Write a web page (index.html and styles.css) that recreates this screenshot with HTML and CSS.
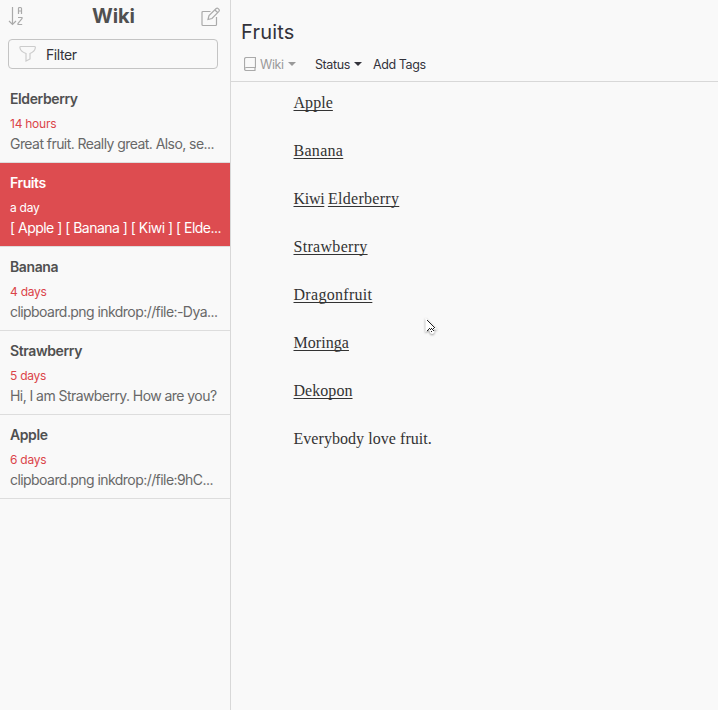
FILE: index.html
```
<!DOCTYPE html>
<html lang="en">
<head>
<meta charset="utf-8">
<title>Wiki</title>
<link rel="stylesheet" href="styles.css">
</head>
<body>
<div class="app">
  <aside class="sidebar">
    <header class="list-header">
      <svg class="sort-icon" width="18" height="22" viewBox="0 0 18 22"><path d="M4.500 2v17.500M1 16l3.500 3.500L8 16M10.500 9V3.500q0-1 1-1h1q1 0 1 1V9M10.500 6h3M10 12.500h4v1L10 18.500v1h4.200"/></svg>
      <h1 class="list-title">Wiki</h1>
      <svg class="compose-icon" width="20" height="20" viewBox="0 0 20 20"><path d="M9.500 4.500H2q-1 0-1 1V17.500q0 1 1 1h12.500q1 0 1-1V10M7 12.500l1-4 7.200-7q1-.8 2 .1l.7.7q.9 1 0 2L11 11.500zM14 3l3 3"/></svg>
    </header>
    <div class="filter">
      <svg class="filter-icon" width="18" height="18" viewBox="0 0 18 18"><path d="M1.500 1.500h14q1 0 .8 1.500-.5 3.500-5.300 5.500v5.500l-4 2V8.500Q1.500 6.500 1 3 .7 1.500 1.500 1.500z"/></svg>
      <span>Filter</span>
    </div>
    <div class="notes">
      <article class="note"><h2>Elderberry</h2><time>14 hours</time><p>Great fruit. Really great. Also, se...</p></article>
      <article class="note selected"><h2>Fruits</h2><time>a day</time><p>[ Apple ] [ Banana ] [ Kiwi ] [ Elde...</p></article>
      <article class="note"><h2>Banana</h2><time>4 days</time><p>clipboard.png inkdrop://file:-Dya...</p></article>
      <article class="note"><h2>Strawberry</h2><time>5 days</time><p>Hi, I am Strawberry. How are you?</p></article>
      <article class="note"><h2>Apple</h2><time>6 days</time><p>clipboard.png inkdrop://file:9hC...</p></article>
    </div>
  </aside>
  <main class="editor">
    <header class="note-header">
      <h1 class="note-title">Fruits</h1>
      <div class="meta">
        <span class="book"><svg class="book-icon" width="12" height="14" viewBox="0 0 12 14"><path d="M2.500.5h9v10h-9q-2 0-2 1.500V2.500q0-2 2-2zM.5 12q0 1.500 2 1.500h9M11 10.500v3"/></svg><span class="book-name">Wiki</span><i class="caret"></i></span>
        <span class="status"><span>Status</span><i class="caret"></i></span>
        <span class="tags">Add Tags</span>
      </div>
    </header>
    <div class="preview">
      <p><a>Apple</a></p>
      <p><a class="wide">Banana</a></p>
      <p class="pair"><a class="tight">Kiwi</a> <a class="wide">Elderberry</a></p>
      <p><a class="wide">Strawberry</a></p>
      <p><a class="wide">Dragonfruit</a></p>
      <p><a>Moringa</a></p>
      <p><a>Dekopon</a></p>
      <p>Everybody love fruit.</p>
    </div>
  </main>
  <svg class="cursor" width="16" height="20" viewBox="0 0 16 20"><path class="cursor-body" d="M2 2v12l3-2.500 2 4.500q2 1 3-1l-1-3h3z"/><path class="cursor-edge" d="M3 3h1v1H3zM4 4h1v1H4zM5 5h1v1H5zM6 6h1v1H6zM7 7h1v1H7zM8 8h1v1H8zM9 9h1v1H9zM10 10h1v1h-1zM3 13h1v1H3zM4 12h1v1H4zM5 11h1v1H5zM6 12h1v1H6zM7 14h1v1H7zM7 11h1v1H7zM8 12h1v1H8zM9 11h1v1H9zM9 13h1v1H9z"/></svg>
</div>
</body>
</html>
```
FILE: styles.css
```
* { box-sizing: border-box; }
body { margin: 0; background: #f9f9f9; font-family: Inter, "Liberation Sans", sans-serif; color: #33333b; }
h1, h2, p { margin: 0; }
svg { fill: none; stroke: #aaa; stroke-width: 1.2; flex: none; }
.app { position: relative; display: flex; width: 718px; height: 710px; overflow: hidden; }
.sidebar { width: 231px; border-right: 1px solid #d8d8d8; flex: none; }
.list-header { height: 39px; padding: 5px 9px 0 8px; display: flex; justify-content: space-between; align-items: flex-start; }
.list-title { font-size: 20px; line-height: 22px; font-weight: 700; color: #505050; letter-spacing: -.1px; }
.compose-icon { margin-top: 2px; }
.filter { width: 210px; height: 30px; margin-left: 8px; border: 1px solid #c4c4c4; border-radius: 4px; display: flex; align-items: center; padding-left: 10px; gap: 9px; font-size: 14px; letter-spacing: -.4px; line-height: 20px; }
.filter span { padding-top: 2px; }
.filter-icon { stroke: #ccc; }
.notes { margin-top: 10px; }
.note { height: 84px; padding: 10px 0 0 10px; border-bottom: 1px solid #ddd; white-space: nowrap; }
.note h2 { font-size: 14px; line-height: 20px; font-weight: 600; color: #505050; letter-spacing: -.4px; }
.note time { display: block; margin-top: 5px; font-size: 12px; line-height: 20px; color: #db4449; letter-spacing: -.25px; }
.note p { font-size: 14px; line-height: 20px; color: #686868; letter-spacing: -.56px; }
.note.selected { background: #dd4c50; }
.note.selected h2, .note.selected time, .note.selected p { color: #fff; }
.note.selected p { letter-spacing: -.52px; }
.editor { flex: 1; }
.note-header { height: 82px; padding: 20px 0 0 10px; border-bottom: 1px solid #d8d8d8; }
.note-title { font-size: 20px; line-height: 24px; font-weight: 400; letter-spacing: .2px; }
.meta { display: flex; align-items: center; height: 20px; margin-top: 10px; padding-left: 3px; font-size: 12.5px; letter-spacing: -.4px; }
.book, .status { display: flex; align-items: center; }
.book { width: 71px; color: #999; }
.book-name { margin: 0 4px; }
.status { width: 58px; gap: 4px; }
.caret { border: 4px solid transparent; border-top-color: currentColor; border-bottom: 0; }
.preview { padding: 9px 0 0 62.5px; font-family: "Liberation Serif", serif; font-size: 16px; line-height: 24px; letter-spacing: .05px; color: #333; }
.preview p { margin-bottom: 24px; }
.preview a { text-decoration: underline 1px; text-underline-offset: 2px; text-decoration-skip-ink: none; }
.preview .wide { letter-spacing: .3px; }
.preview .tight { letter-spacing: -.3px; }
.preview .pair { word-spacing: -.5px; }
.cursor { position: absolute; left: 424px; top: 317px; filter: drop-shadow(0 1px 1px #0006); }
.cursor-body { fill: #fff; stroke: #fff; }
.cursor-edge { fill: #222; stroke: none; }
```
